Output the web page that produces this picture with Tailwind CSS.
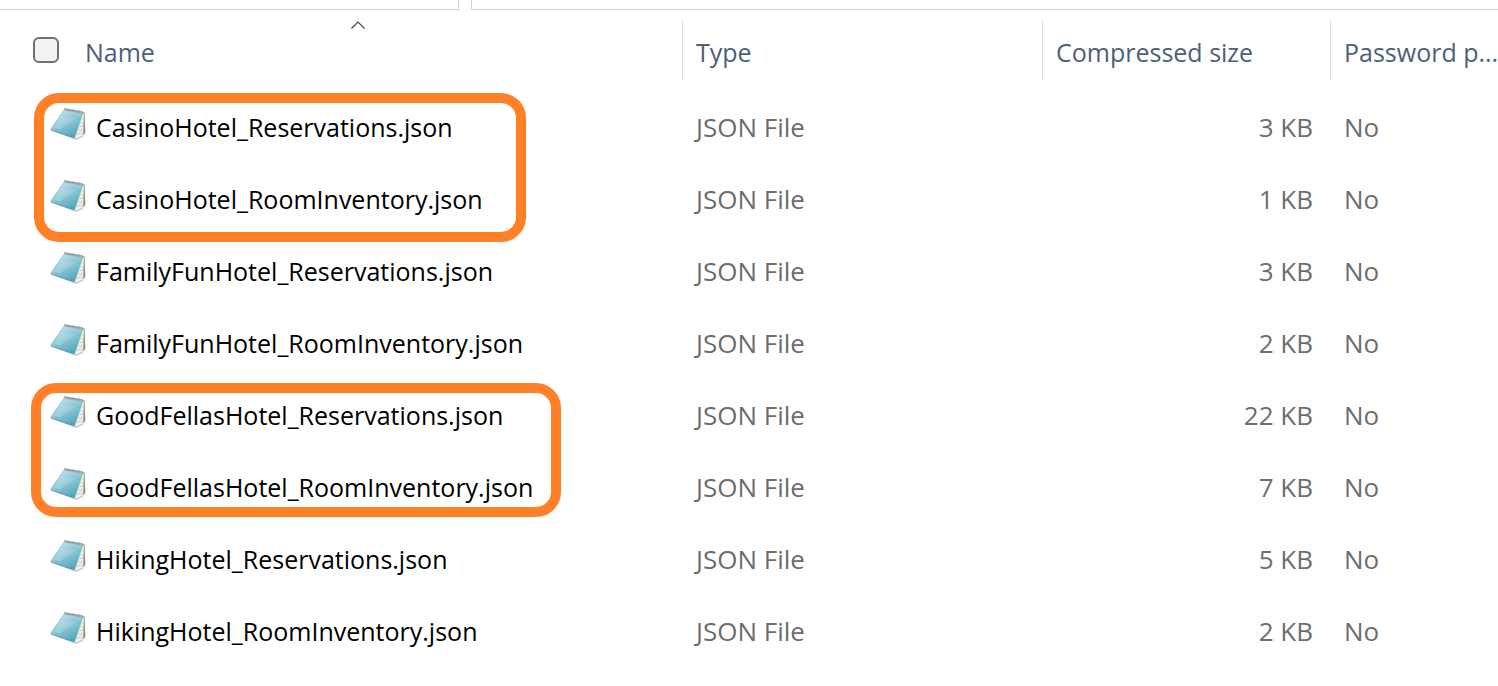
<!DOCTYPE html>
<html lang="en">
<head>
<meta charset="utf-8">
<title>Files</title>
<script src="https://cdn.jsdelivr.net/npm/@tailwindcss/browser@4"></script>
</head>
<body class="bg-white font-['Open_Sans','Noto_Sans',sans-serif] text-[26px] leading-9 text-[#6d6d6d]">
<svg class="absolute size-0" aria-hidden="true">
  <defs>
    <linearGradient id="cover" x1="0.2" y1="0" x2=".8" y2="1">
      <stop offset="0" stop-color="#c3e3ea"/><stop offset=".5" stop-color="#86c5d3"/><stop offset="1" stop-color="#4a9fb2"/>
    </linearGradient>
    <symbol id="notepad" viewBox="30 22 108 102">
      <path d="M128 36l6 3 2 62-8 6z" fill="#a58a5c"/>
      <path d="M127 38L100 116l10 2 19-9 3-66z" fill="#eef1f3" stroke="#b9c0c4" stroke-width="1"/>
      <path d="M126 58l5 1M122 69l9 1M118 80l13 1M114 91l17 1M110 102l20 1" stroke="#aebcc2" stroke-width="2"/>
      <path d="M103 116l9 2 17-9" fill="none" stroke="#9a9f9f" stroke-width="2"/>
      <path d="M73 29L32 88q-1 3 2 4l66 23q4 1 5-3L129 40z" fill="url(#cover)" stroke="#7db4c0" stroke-width="1"/>
      <path d="M62 52L41 84l22 4 46-32z" fill="#fff" opacity=".15"/>
      <path d="M33 91l68 24" stroke="#4b8795" stroke-width="2"/>
      <path d="M73 26l56 9-1 6-56-9z" fill="#b5bec2"/>
      <path d="M74 29l55 9" stroke="#78848a" stroke-width="7" stroke-dasharray="2.5 3"/>
    </symbol>
  </defs>
</svg>
<div class="flex h-[10px] gap-3">
  <div class="w-[459px] border-r border-b border-[#d2d2d2]"></div>
  <div class="flex-1 border-l border-b border-[#d2d2d2]"></div>
</div>
<main class="relative pt-[10px]">
  <table class="w-full table-fixed border-collapse text-left">
    <colgroup><col class="w-[682px]"><col class="w-[360px]"><col class="w-[288px]"><col></colgroup>
    <thead class="text-[25px] text-[#4c607a]">
      <tr>
        <th class="p-0 pb-3 font-normal">
          <div class="relative flex h-[60px] items-center pl-[33px] pt-1">
            <input id="all" type="checkbox" aria-label="Select all" class="mb-1 size-[26px] appearance-none rounded-md border-2 border-[#707070] bg-[#f3f3f3]">
            <button class="ml-[26px]">Name</button>
            <svg class="absolute top-0 left-[351px] h-[10px] w-[14px]" viewBox="0 0 14 10" fill="none" stroke="#444" stroke-width="1.2" aria-hidden="true"><path d="M.5 8.500L7 2l6.500 6.500"/></svg>
          </div>
        </th>
        <th class="p-0 pb-3 font-normal"><div class="flex h-[60px] items-center border-l border-[#e0e0e0] pl-[13px] pt-1"><button>Type</button></div></th>
        <th class="p-0 pb-3 font-normal"><div class="flex h-[60px] items-center border-l border-[#e0e0e0] pl-[13px] pt-1"><button>Compressed size</button></div></th>
        <th class="p-0 pb-3 font-normal"><div class="flex h-[60px] items-center border-l border-[#e0e0e0] pl-[13px] pt-1"><button class="whitespace-nowrap">Password p...</button></div></th>
      </tr>
    </thead>
    <tbody id="rows"></tbody>
  </table>
  <div class="pointer-events-none absolute top-[83px] left-[34px] h-[149px] w-[492px] rounded-[25px] border-10 border-[#ff8027]"></div>
  <div class="pointer-events-none absolute top-[373px] left-[31px] h-[134px] w-[530px] rounded-[25px] border-10 border-[#ff8027]"></div>
</main>
<script>
const files = [
  ["CasinoHotel_Reservations.json", 3], ["CasinoHotel_RoomInventory.json", 1],
  ["FamilyFunHotel_Reservations.json", 3], ["FamilyFunHotel_RoomInventory.json", 2],
  ["GoodFellasHotel_Reservations.json", 22], ["GoodFellasHotel_RoomInventory.json", 7],
  ["HikingHotel_Reservations.json", 5], ["HikingHotel_RoomInventory.json", 2]
];
document.getElementById("rows").innerHTML = files.map(([name, kb]) => `
  <tr class="h-[72px]">
    <td class="p-0 pb-0.5 pl-[50px] text-[25px] text-black"><div class="flex items-center gap-[10px]"><svg class="mb-1.5 h-[34px] w-9 shrink-0" aria-hidden="true"><use href="#notepad"/></svg><span>${name}</span></div></td>
    <td class="p-0 pb-0.5 pl-[14px]">JSON File</td>
    <td class="p-0 pb-0.5 pr-[17px] text-right">${kb} KB</td>
    <td class="p-0 pb-0.5 pl-[14px]">No</td>
  </tr>`).join("");
</script>
</body>
</html>
